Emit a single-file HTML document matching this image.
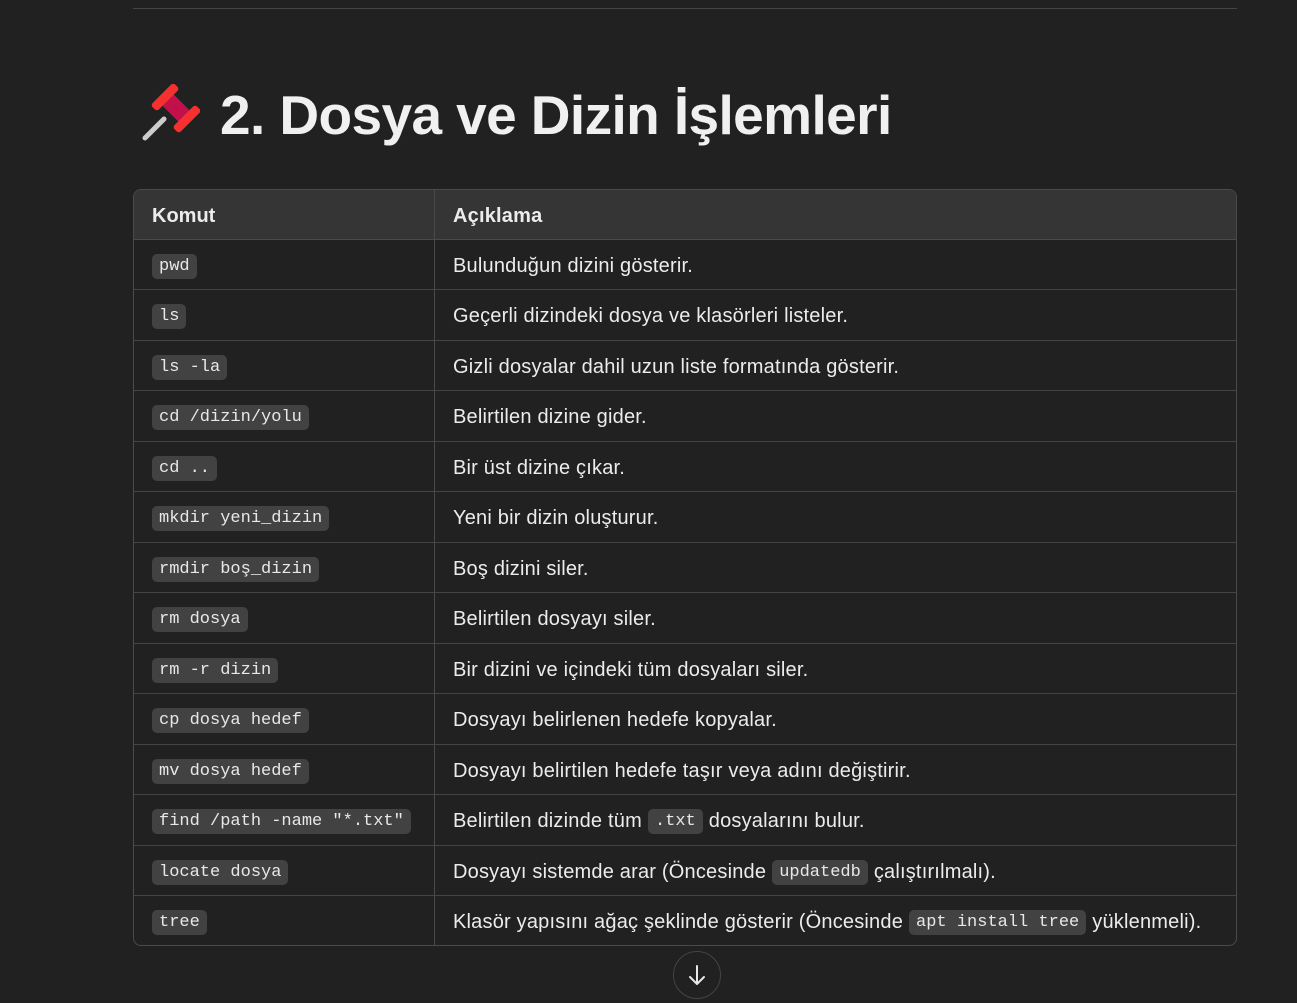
<!DOCTYPE html>
<html><head><meta charset="utf-8"><style>
html,body{margin:0;padding:0;background:#212121;width:1297px;height:994px;overflow:hidden;font-family:"Liberation Sans","DejaVu Sans",sans-serif;color:#ececec}
.hr{position:absolute;left:133px;top:8px;width:1104px;height:1px;background:#444}
h1{position:absolute;left:220px;top:80px;margin:0;font-size:55px;font-weight:bold;letter-spacing:-0.6px;color:#f0f0f0;line-height:70px}
.tbl{position:absolute;left:133px;top:189px;width:1102px;height:755px;border:1px solid #4a4a4a;border-radius:8px;overflow:hidden}
.head{position:absolute;left:0;top:0;width:100%;height:49px;background:#353535;border-bottom:1px solid #4a4a4a}
.row{position:absolute;left:0;width:100%;height:50px;border-bottom:1px solid #444}
.c1,.c2{position:absolute;top:2px;height:100%;display:flex;align-items:center;font-size:20px}
.c1{left:18px}
.c2{left:319px;white-space:nowrap;letter-spacing:0.2px}
.vl{position:absolute;left:300px;top:0;width:1px;height:100%;background:#4a4a4a}
.head .c1,.head .c2{font-weight:bold;font-size:20px}
code{font-family:"Liberation Mono","DejaVu Sans Mono",monospace;font-size:17px;letter-spacing:0;background:#424242;border-radius:5px;padding:3px 7px;color:#e8e8e8}
.c2 code{margin:0 6px}
.arrow{position:absolute;left:673px;top:951px;width:46px;height:46px;border:1px solid #444;border-radius:50%;background:#212121}
</style></head><body>
<div class="hr"></div>
<svg style="position:absolute;left:140px;top:84px" width="60" height="60" viewBox="0 0 60 60">
<line x1="5" y1="54" x2="24" y2="35" stroke="#ccc" stroke-width="5" stroke-linecap="round"/>
<g transform="rotate(45 36 24)">
<rect x="20" y="16" width="32" height="16" rx="4" fill="#c2104a"/>
<rect x="16" y="8" width="9" height="32" rx="3" fill="#f4312f"/>
<rect x="47" y="8" width="9" height="32" rx="3" fill="#f4312f"/>
</g>
</svg>
<h1>2. Dosya ve Dizin İşlemleri</h1>
<div class="tbl">
<div class="vl"></div>
<div class="head"><div class="vl"></div><div class="c1">Komut</div><div class="c2">Açıklama</div></div>
<div class="row" style="top:49px"><div class="c1"><code>pwd</code></div><div class="c2">Bulunduğun dizini gösterir.</div></div>
<div class="row" style="top:99.5px"><div class="c1"><code>ls</code></div><div class="c2">Geçerli dizindeki dosya ve klasörleri listeler.</div></div>
<div class="row" style="top:150px"><div class="c1"><code>ls -la</code></div><div class="c2">Gizli dosyalar dahil uzun liste formatında gösterir.</div></div>
<div class="row" style="top:200.5px"><div class="c1"><code>cd /dizin/yolu</code></div><div class="c2">Belirtilen dizine gider.</div></div>
<div class="row" style="top:251px"><div class="c1"><code>cd ..</code></div><div class="c2">Bir üst dizine çıkar.</div></div>
<div class="row" style="top:301.5px"><div class="c1"><code>mkdir yeni_dizin</code></div><div class="c2">Yeni bir dizin oluşturur.</div></div>
<div class="row" style="top:352px"><div class="c1"><code>rmdir boş_dizin</code></div><div class="c2">Boş dizini siler.</div></div>
<div class="row" style="top:402.5px"><div class="c1"><code>rm dosya</code></div><div class="c2">Belirtilen dosyayı siler.</div></div>
<div class="row" style="top:453px"><div class="c1"><code>rm -r dizin</code></div><div class="c2">Bir dizini ve içindeki tüm dosyaları siler.</div></div>
<div class="row" style="top:503.5px"><div class="c1"><code>cp dosya hedef</code></div><div class="c2">Dosyayı belirlenen hedefe kopyalar.</div></div>
<div class="row" style="top:554px"><div class="c1"><code>mv dosya hedef</code></div><div class="c2">Dosyayı belirtilen hedefe taşır veya adını değiştirir.</div></div>
<div class="row" style="top:604.5px"><div class="c1"><code>find /path -name "*.txt"</code></div><div class="c2">Belirtilen dizinde tüm<code>.txt</code>dosyalarını bulur.</div></div>
<div class="row" style="top:655px"><div class="c1"><code>locate dosya</code></div><div class="c2">Dosyayı sistemde arar (Öncesinde<code>updatedb</code>çalıştırılmalı).</div></div>
<div class="row" style="top:705.5px;border-bottom:none"><div class="c1"><code>tree</code></div><div class="c2">Klasör yapısını ağaç şeklinde gösterir (Öncesinde<code>apt install tree</code>yüklenmeli).</div></div>
</div>
<div class="arrow"><svg width="46" height="46" viewBox="0 0 46 46"><path d="M23 14v18M16 25l7 7 7-7" stroke="#e8e8e8" stroke-width="2" fill="none" stroke-linecap="round" stroke-linejoin="round"/></svg></div>
</body></html>
